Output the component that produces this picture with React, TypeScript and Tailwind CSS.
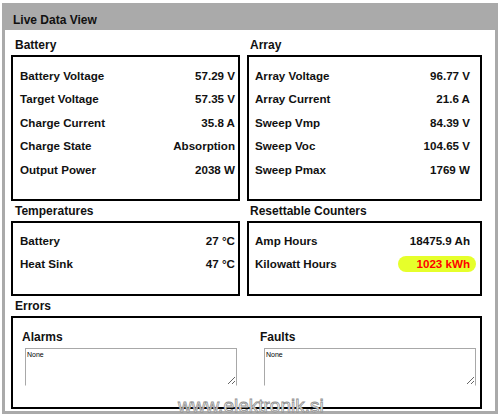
import React from "react";

type Row = { label: string; value: string; highlight?: boolean };

function DataBox({
  rows,
  className,
  pl,
  pr,
  pt,
  pb,
}: {
  rows: Row[];
  className: string;
  pl: string;
  pr: string;
  pt: string;
  pb: string;
}) {
  return (
    <div className={`border-2 border-black ${className} ${pl} ${pr} ${pt} ${pb}`}>
      {rows.map((r) => (
        <div key={r.label} className="flex justify-between items-center h-[23.4px] text-[11.6px] font-bold text-[#111]">
          <span>{r.label}</span>
          {r.highlight ? (
            <span className="inline-block w-[78px] h-[16px] leading-[16px] text-right pr-[6px] -mr-[6px] rounded-full bg-[#e6ff2b] text-[#ff0000]">
              {r.value}
            </span>
          ) : (
            <span>{r.value}</span>
          )}
        </div>
      ))}
    </div>
  );
}

function Heading({ children, ml }: { children: React.ReactNode; ml: string }) {
  return (
    <div className={`h-[20px] flex items-center text-[12px] font-bold text-[#111] ${ml}`}>{children}</div>
  );
}

function ErrorCol({ title, ml, taMl, taW }: { title: string; ml: string; taMl: string; taW: string }) {
  return (
    <div className={`flex flex-col ${ml}`}>
      <div className="h-[14px] leading-[14px] text-[12px] font-bold text-[#111]">{title}</div>
      <textarea
        readOnly
        value="None"
        className={`mt-[4px] ${taMl} ${taW} h-[38px] border border-[#a8a8a8] border-b-white text-[7px] leading-[8px] px-[1px] py-[2px] text-black resize bg-white outline-none`}
        style={{ fontFamily: '"Liberation Sans", Arial, sans-serif' }}
      />
    </div>
  );
}

export default function App() {
  return (
    <div
      className="w-[500px] h-[419px] bg-white relative overflow-hidden"
      style={{ fontFamily: '"Liberation Sans", Arial, sans-serif' }}
    >
      <div className="ml-[2px] mt-[3px] w-[496px] border-[3px] border-t-0 border-[#aaaaaa]">
        <div className="h-[27px] bg-[#aaaaaa] flex items-center pt-[7px] pl-[8px] text-[12px] font-bold text-[#111]">
          Live Data View
        </div>
        <div className="pl-[6px] pr-[13px] pt-[5px] pb-[2px]">
          <div className="flex gap-[7px]">
            <div className="w-[229px] flex flex-col">
              <Heading ml="ml-[4px]">Battery</Heading>
              <DataBox
                className="h-[146px]"
                pl="pl-[7px]"
                pr="pr-[3px]"
                pt="pt-[7px]"
                pb="pb-[18px]"
                rows={[
                  { label: "Battery Voltage", value: "57.29 V" },
                  { label: "Target Voltage", value: "57.35 V" },
                  { label: "Charge Current", value: "35.8 A" },
                  { label: "Charge State", value: "Absorption" },
                  { label: "Output Power", value: "2038 W" },
                ]}
              />
              <Heading ml="ml-[4px]">Temperatures</Heading>
              <DataBox
                className="h-[75px]"
                pl="pl-[7px]"
                pr="pr-[3px]"
                pt="pt-[6px]"
                pb="pb-[18px]"
                rows={[
                  { label: "Battery", value: "27 °C" },
                  { label: "Heat Sink", value: "47 °C" },
                ]}
              />
            </div>
            <div className="w-[235px] flex flex-col">
              <Heading ml="ml-[3px]">Array</Heading>
              <DataBox
                className="h-[146px]"
                pl="pl-[6px]"
                pr="pr-[10px]"
                pt="pt-[7px]"
                pb="pb-[18px]"
                rows={[
                  { label: "Array Voltage", value: "96.77 V" },
                  { label: "Array Current", value: "21.6 A" },
                  { label: "Sweep Vmp", value: "84.39 V" },
                  { label: "Sweep Voc", value: "104.65 V" },
                  { label: "Sweep Pmax", value: "1769 W" },
                ]}
              />
              <Heading ml="ml-[3px]">Resettable Counters</Heading>
              <DataBox
                className="h-[75px]"
                pl="pl-[6px]"
                pr="pr-[10px]"
                pt="pt-[6px]"
                pb="pb-[18px]"
                rows={[
                  { label: "Amp Hours", value: "18475.9 Ah" },
                  { label: "Kilowatt Hours", value: "1023 kWh", highlight: true },
                ]}
              />
            </div>
          </div>
          <Heading ml="ml-[4px]">Errors</Heading>
          <div className="h-[93px] border-2 border-black pt-[12px] flex">
            <ErrorCol title="Alarms" ml="ml-[9px]" taMl="ml-[3px]" taW="w-[212px]" />
            <ErrorCol title="Faults" ml="ml-[23px]" taMl="ml-[4px]" taW="w-[212px]" />
          </div>
        </div>
      </div>
      <div
        className="absolute left-[178px] top-[395px] text-[19px] leading-[22px] text-white [-webkit-text-stroke:0.8px_#8f8f8f] pointer-events-none"
        style={{ fontFamily: '"Liberation Sans", Arial, sans-serif' }}
      >
        www.elektronik.si
      </div>
    </div>
  );
}
